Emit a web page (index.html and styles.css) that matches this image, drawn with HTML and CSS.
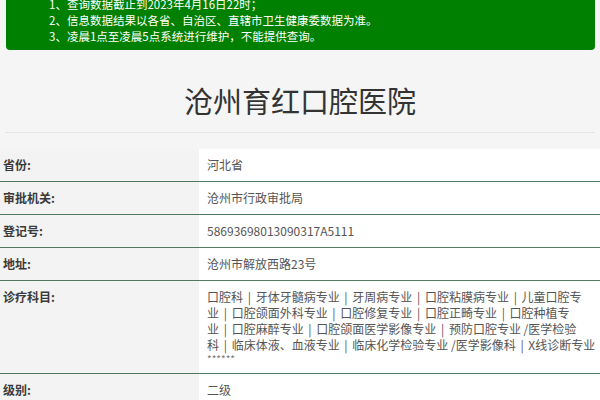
FILE: index.html
```html
<!DOCTYPE html>
<html lang="zh-CN">
<head>
<meta charset="utf-8">
<title>沧州育红口腔医院</title>
<link rel="stylesheet" href="styles.css">
</head>
<body>
<div class="page">
  <div class="notice">
    <p>1、查询数据截止到2023年4月16日22时；</p>
    <p>2、信息数据结果以各省、自治区、直辖市卫生健康委数据为准。</p>
    <p>3、凌晨1点至凌晨5点系统进行维护，不能提供查询。</p>
  </div>
  <h1 class="title">沧州育红口腔医院</h1>
  <table class="info">
    <tr><th>省份:</th><td>河北省</td></tr>
    <tr><th>审批机关:</th><td>沧州市行政审批局</td></tr>
    <tr><th>登记号:</th><td>58693698013090317A5111</td></tr>
    <tr><th>地址:</th><td>沧州市解放西路23号</td></tr>
    <tr><th>诊疗科目:</th><td>口腔科<span class="sep">&nbsp;|&#8288;&nbsp;</span>牙体牙髓病专业<span class="sep">&nbsp;|&#8288;&nbsp;</span>牙周病专业<span class="sep">&nbsp;|&#8288;&nbsp;</span>口腔粘膜病专业<span class="sep">&nbsp;|&#8288;&nbsp;</span>儿童口腔专业<span class="sep">&nbsp;|&#8288;&nbsp;</span>口腔颌面外科专业<span class="sep">&nbsp;|&#8288;&nbsp;</span>口腔修复专业<span class="sep">&nbsp;|&#8288;&nbsp;</span>口腔正畸专业<span class="sep">&nbsp;|&#8288;&nbsp;</span>口腔种植专业<span class="sep">&nbsp;|&#8288;&nbsp;</span>口腔麻醉专业<span class="sep">&nbsp;|&#8288;&nbsp;</span>口腔颌面医学影像专业<span class="sep">&nbsp;|&#8288;&nbsp;</span>预防口腔专业 /医学检验科<span class="sep">&nbsp;|&#8288;&nbsp;</span>临床体液、血液专业<span class="sep">&nbsp;|&#8288;&nbsp;</span>临床化学检验专业 /医学影像科<span class="sep">&nbsp;|&#8288;&nbsp;</span>X线诊断专业<span class="stars">******</span></td></tr>
    <tr><th>级别:</th><td>二级</td></tr>
  </table>
</div>
</body>
</html>
```

FILE: styles.css
```css
html, body {
  margin: 0;
  padding: 0;
  background: #f5f5f5;
  font-family: "Noto Sans CJK SC", "Microsoft YaHei", sans-serif;
  overflow: hidden;
}

.page {
  width: 600px;
}

.notice {
  margin: -4px 5px 0 6px;
  padding: 0 0 6px 43px;
  background: #008000;
  border-radius: 0 0 4px 4px;
  color: #ffffff;
  font-size: 11.5px;
  line-height: 16px;
}

.notice p {
  margin: 0;
}

.title {
  margin: 30px 5px 0 5px;
  padding-bottom: 12px;
  border-bottom: 1px solid #e6e6e6;
  text-align: center;
  font-size: 29px;
  line-height: 40px;
  font-weight: normal;
  color: #333333;
}

.info {
  margin-top: 16px;
  width: 600px;
  border-collapse: collapse;
  font-size: 12px;
  line-height: 16px;
}

.info th {
  width: 196px;
  padding: 8px 0 8px 3px;
  text-align: left;
  vertical-align: top;
  font-weight: bold;
  color: #3a3a3a;
  background: #f3f3f3;
  border-bottom: 1px solid #4f7a60;
}

.info td {
  padding: 8px 1px 8px 8px;
  color: #555555;
  background: #ffffff;
  border-bottom: 1px solid #4f7a60;
}

.sep {
  padding: 0 2px;
}

.stars {
  display: block;
  font-size: 10px;
  line-height: 12px;
  color: #777777;
}
```
